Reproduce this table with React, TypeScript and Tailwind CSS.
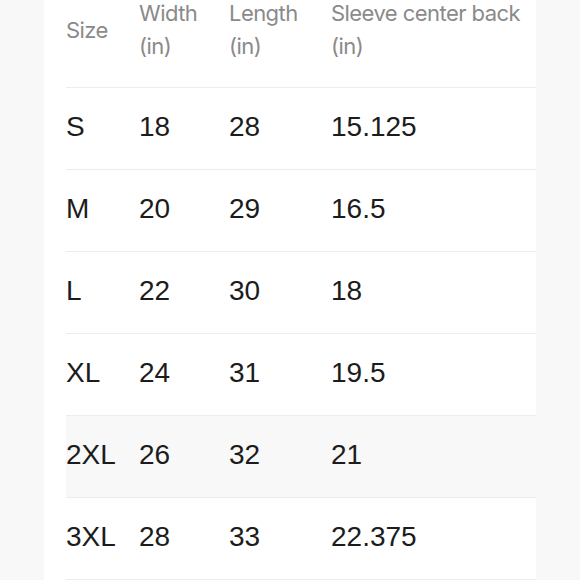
const rows = [
  { size: 'S', width: '18', length: '28', sleeve: '15.125' },
  { size: 'M', width: '20', length: '29', sleeve: '16.5' },
  { size: 'L', width: '22', length: '30', sleeve: '18' },
  { size: 'XL', width: '24', length: '31', sleeve: '19.5' },
  { size: '2XL', width: '26', length: '32', sleeve: '21', shaded: true },
  { size: '3XL', width: '28', length: '33', sleeve: '22.375' },
];

const cols = 'grid grid-cols-[73px_90px_102px_1fr]';

export default function App() {
  return (
    <div className="flex h-[580px] w-[580px] overflow-hidden bg-[#f8f8f8]">
      <div className="ml-[44px] h-full w-[492px] bg-white pl-[22px]">
        <div className="-mt-[3px]">
          <div
            className={`${cols} items-center border-b border-[#ececec] pb-[24px] text-[22px] leading-[33px] tracking-[-0.025em] text-[#8a8a8a]`}
            style={{ fontFamily: 'Inter, "Liberation Sans", sans-serif' }}
          >
            <div>Size</div>
            <div>
              Width
              <br />
              (in)
            </div>
            <div>
              Length
              <br />
              (in)
            </div>
            <div>
              Sleeve center back
              <br />
              (in)
            </div>
          </div>

          {rows.map((r) => (
            <div
              key={r.size}
              className={`${cols} h-[82px] items-center border-b border-[#ececec] pb-[4px] text-[28px] text-[#1c1c1c] ${
                r.shaded ? 'bg-[#f8f8f8]' : ''
              }`}
              style={{ fontFamily: '"Liberation Sans", Arial, sans-serif' }}
            >
              <div>{r.size}</div>
              <div>{r.width}</div>
              <div>{r.length}</div>
              <div>{r.sleeve}</div>
            </div>
          ))}
        </div>
      </div>
    </div>
  );
}
